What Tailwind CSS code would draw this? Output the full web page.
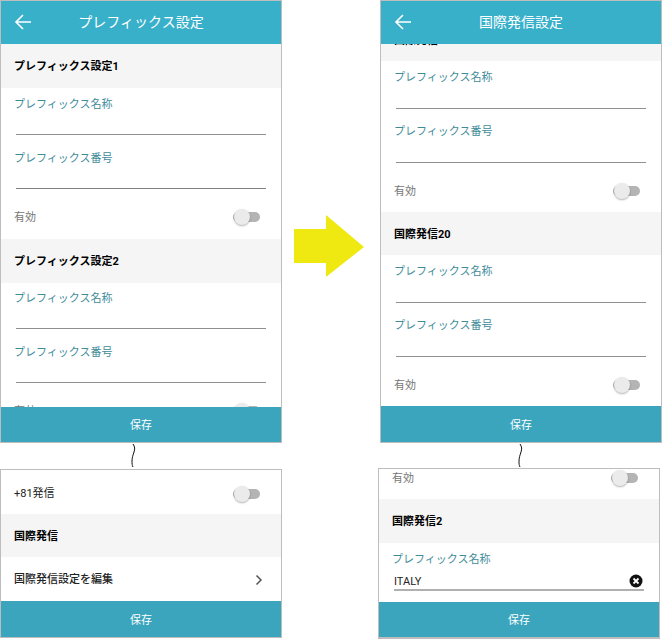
<!DOCTYPE html>
<html lang="ja">
<head>
<meta charset="UTF-8">
<title>プレフィックス設定</title>
<script src="https://cdn.jsdelivr.net/npm/@tailwindcss/browser@4"></script>
</head>
<body class="bg-white">
<div class="relative w-[670px] h-[641px] overflow-hidden bg-white text-[11px] font-['Roboto','Noto_Sans_CJK_JP',sans-serif]">

  <!-- top left: prefix settings -->
  <div class="absolute left-0 top-0 w-[282px] h-[443px] border border-[#bdbdbd] flex flex-col">
    <div class="h-[43px] shrink-0 bg-[#39b0ca] relative flex items-center justify-center pb-px text-white text-sm z-10">
      <svg class="absolute left-[13px] top-[12px]" width="18" height="18" viewBox="0 0 18 18" fill="none" stroke="white" stroke-width="1.6"><path d="M17 9H2M9 2 2 9l7 7"/></svg>
      プレフィックス設定
    </div>
    <div class="flex-1 overflow-hidden">
      <div class="h-11 bg-[#f5f5f5] flex items-center pl-[13px] pt-[2px] font-bold text-black">プレフィックス設定1</div>
      <div class="h-[47px] mx-[15px] border-b border-[#909090] relative"><span class="absolute -left-0.5 top-[9px] text-[#3f8c99]">プレフィックス名称</span></div>
      <div class="h-[54px] mx-[15px] border-b border-[#808080] relative"><span class="absolute -left-0.5 top-[16px] text-[#3f8c99]">プレフィックス番号</span></div>
      <div class="h-[50px] flex items-center justify-between pl-[13px] pr-[21px] pt-[6px] text-[#777]">
        <span class="mt-[2px]">有効</span>
        <div class="relative w-[27px] h-[10px] rounded-full bg-[#b4b4b4]"><div class="absolute left-[1px] -top-[3px] w-4 h-4 rounded-full bg-[#ebebeb] shadow-[0_1px_2px_rgba(0,0,0,0.3)]"></div></div>
      </div>
      <div class="h-11 bg-[#f5f5f5] flex items-center pl-[13px] pt-[2px] font-bold text-black">プレフィックス設定2</div>
      <div class="h-[46px] mx-[15px] border-b border-[#909090] relative"><span class="absolute -left-0.5 top-[8px] text-[#3f8c99]">プレフィックス名称</span></div>
      <div class="h-[54px] mx-[15px] border-b border-[#909090] relative"><span class="absolute -left-0.5 top-[16px] text-[#3f8c99]">プレフィックス番号</span></div>
      <div class="h-[50px] flex items-center justify-between pl-[13px] pr-[21px] pt-[6px] text-[#777]">
        <span class="mt-[2px]">有効</span>
        <div class="relative w-[27px] h-[10px] rounded-full bg-[#b4b4b4]"><div class="absolute left-[1px] -top-[3px] w-4 h-4 rounded-full bg-[#ebebeb] shadow-[0_1px_2px_rgba(0,0,0,0.3)]"></div></div>
      </div>
    </div>
    <div class="h-[35px] shrink-0 bg-[#3aa5bd] text-white flex items-center justify-center pt-1">保存</div>
  </div>

  <!-- top right: international settings -->
  <div class="absolute left-[380px] top-0 w-[282px] h-[443px] border border-[#bdbdbd] flex flex-col">
    <div class="h-[43px] shrink-0 bg-[#39b0ca] relative flex items-center justify-center pb-px text-white text-sm z-10">
      <svg class="absolute left-[13px] top-[12px]" width="18" height="18" viewBox="0 0 18 18" fill="none" stroke="white" stroke-width="1.6"><path d="M17 9H2M9 2 2 9l7 7"/></svg>
      国際発信設定
    </div>
    <div class="flex-1 overflow-hidden">
      <div class="h-[17px] bg-[#f5f5f5] flex items-start pl-[13px] font-bold text-black overflow-hidden"><span class="-mt-[11px]">国際発信19</span></div>
      <div class="h-[48px] mx-[15px] border-b border-[#909090] relative"><span class="absolute -left-0.5 top-[9px] text-[#3f8c99]">プレフィックス名称</span></div>
      <div class="h-[54px] mx-[15px] border-b border-[#909090] relative"><span class="absolute -left-0.5 top-[15px] text-[#3f8c99]">プレフィックス番号</span></div>
      <div class="h-[49px] flex items-center justify-between pl-[13px] pr-[21px] pt-[6px] text-[#777]">
        <span class="mt-[4px]">有効</span>
        <div class="relative w-[27px] h-[10px] rounded-full bg-[#b4b4b4]"><div class="absolute left-[1px] -top-[3px] w-4 h-4 rounded-full bg-[#ebebeb] shadow-[0_1px_2px_rgba(0,0,0,0.3)]"></div></div>
      </div>
      <div class="h-[43px] bg-[#f5f5f5] flex items-center pl-[13px] pt-[3px] font-bold text-black">国際発信20</div>
      <div class="h-[48px] mx-[15px] border-b border-[#909090] relative"><span class="absolute -left-0.5 top-[9px] text-[#3f8c99]">プレフィックス名称</span></div>
      <div class="h-[54px] mx-[15px] border-b border-[#909090] relative"><span class="absolute -left-0.5 top-[15px] text-[#3f8c99]">プレフィックス番号</span></div>
      <div class="h-[49px] flex items-center justify-between pl-[13px] pr-[21px] pt-[6px] text-[#777]">
        <span class="mt-[4px]">有効</span>
        <div class="relative w-[27px] h-[10px] rounded-full bg-[#b4b4b4]"><div class="absolute left-[1px] -top-[3px] w-4 h-4 rounded-full bg-[#ebebeb] shadow-[0_1px_2px_rgba(0,0,0,0.3)]"></div></div>
      </div>
    </div>
    <div class="h-[36px] shrink-0 bg-[#3aa5bd] text-white flex items-center justify-center pt-1">保存</div>
  </div>

  <!-- arrow -->
  <svg class="absolute left-[294px] top-[215px]" width="70" height="62" viewBox="0 0 70 62"><path d="M0 14H32V0L70 32 32 62V48H0Z" fill="#f0e911"/></svg>

  <!-- cut marks -->
  <svg class="absolute left-[128px] top-[443px]" width="10" height="26" viewBox="0 0 10 26" fill="none" stroke="#111"><path d="M5 1c2 3 2 5 1 8s-2 6-2 9 0 4 1 6"/></svg>
  <svg class="absolute left-[515px] top-[443px]" width="10" height="26" viewBox="0 0 10 26" fill="none" stroke="#111"><path d="M5 1c2 3 2 5 1 8s-2 6-2 9 0 4 1 6"/></svg>

  <!-- bottom left -->
  <div class="absolute left-0 top-[469px] w-[282px] h-[169px] border border-[#bdbdbd] flex flex-col">
    <div class="h-[44px] flex items-center justify-between pl-[13px] pr-[21px] pt-1 text-[#222]">
      <span>+81発信</span>
      <div class="relative w-[27px] h-[10px] rounded-full bg-[#b4b4b4]"><div class="absolute left-[1px] -top-[3px] w-4 h-4 rounded-full bg-[#ebebeb] shadow-[0_1px_2px_rgba(0,0,0,0.3)]"></div></div>
    </div>
    <div class="h-[43px] bg-[#f5f5f5] flex items-center pl-[13px] pt-1 font-bold text-black">国際発信</div>
    <div class="h-[44px] flex items-center justify-between pl-[13px] pr-[18px] pt-[2px] text-[#222] font-medium">
      <span>国際発信設定を編集</span>
      <svg width="8" height="12" viewBox="0 0 8 12" fill="none" stroke="#555" stroke-width="1.5"><path d="M1.5 1.5 6 6l-4.500 4.500"/></svg>
    </div>
    <div class="flex-1 bg-[#3aa5bd] text-white flex items-center justify-center pt-1">保存</div>
  </div>

  <!-- bottom right -->
  <div class="absolute left-[378px] top-[468px] w-[282px] h-[171px] border border-[#bdbdbd] border-b-2 flex flex-col">
    <div class="h-[30px] flex items-start justify-between pl-[13px] pr-[21px] text-[#777]">
      <span class="mt-[2px]">有効</span>
      <div class="relative w-[27px] h-[10px] mt-[4px] rounded-full bg-[#b4b4b4]"><div class="absolute left-[1px] -top-[3px] w-4 h-4 rounded-full bg-[#ebebeb] shadow-[0_1px_2px_rgba(0,0,0,0.3)]"></div></div>
    </div>
    <div class="h-[44px] bg-[#f5f5f5] flex items-center pl-[13px] pt-[2px] font-bold text-black">国際発信2</div>
    <div class="h-[48px] mx-[15px] border-b-2 border-[#b0b0b0] relative">
      <span class="absolute -left-0.5 top-[9px] text-[#3f8c99]">プレフィックス名称</span>
      <span class="absolute left-0 -bottom-[1px] text-[#222]">ITALY</span>
      <svg class="absolute right-[1px] bottom-[1px]" width="14" height="14" viewBox="0 0 14 14"><circle cx="7" cy="7" r="6.500" fill="#111"/><path d="M4.500 4.500l5 5M9.500 4.500l-5 5" stroke="white" stroke-width="1.800"/></svg>
    </div>
    <div class="h-[11px] shrink-0"></div>
    <div class="flex-1 bg-[#3aa5bd] text-white flex items-center justify-center pt-1">保存</div>
  </div>

</div>
</body>
</html>
